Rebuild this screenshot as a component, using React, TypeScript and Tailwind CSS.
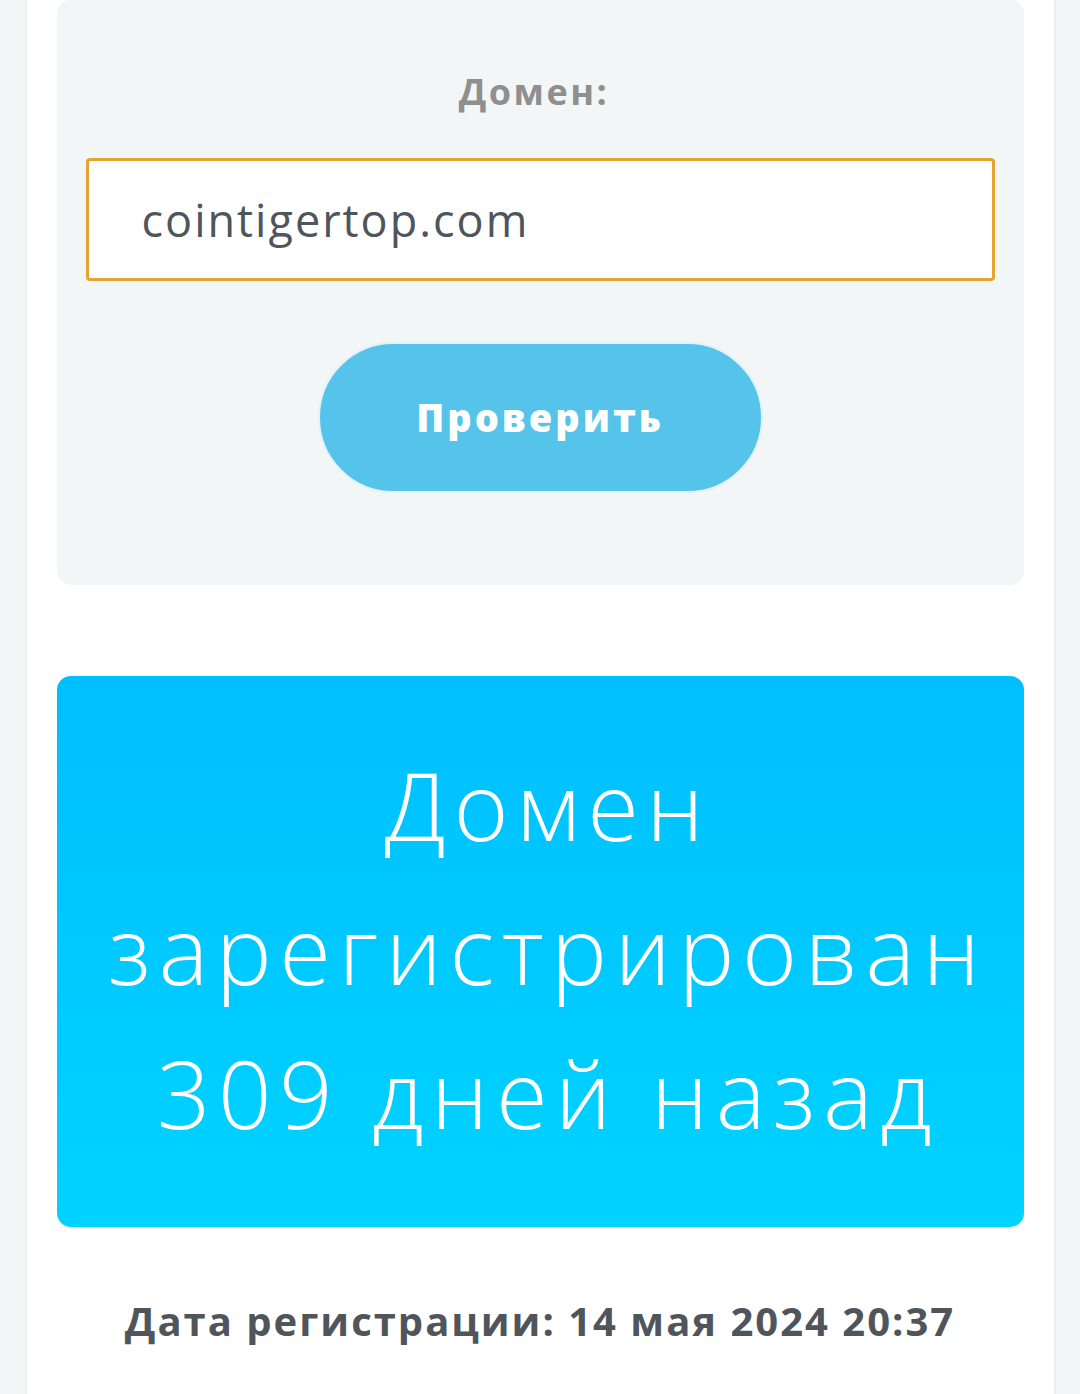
export default function App() {
  return (
    <div className="min-h-[1394px] bg-[#f4f5f7] flex justify-center font-['Open_Sans',sans-serif]">
      <div className="w-[1031px] bg-white border-x-2 border-[#eceef1] px-[30px] pb-10">
        {/* Form card */}
        <div className="bg-[#f3f6f7] rounded-[14px] px-[29px] pt-[68px] pb-[92px] flex flex-col items-center">
          <div className="text-[36px] leading-[48px] font-bold text-[#8f8f8f] tracking-[2.5px] -ml-[12px]">Домен:</div>
          <div className="mt-[42px] w-full h-[123px] bg-white border-[3px] border-[#e5a431] rounded-[4px] flex items-center px-[53px]">
            <span className="text-[45px] text-[#4f555c] tracking-[2px]">cointigertop.com</span>
          </div>
          <button
            type="button"
            className="mt-[61px] w-[445px] h-[151px] rounded-full bg-[#55c3ea] border-2 border-[#e3f1f8] text-white text-[38px] font-extrabold tracking-[3px]"
          >
            Проверить
          </button>
        </div>

        {/* Result */}
        <div className="mt-[91px] h-[551px] rounded-[14px] bg-gradient-to-b from-[#00bfff] to-[#00d3ff] flex items-center justify-center">
          <p className="text-white text-center font-light text-[94px] leading-[144px] tracking-[7.5px] whitespace-nowrap -mt-[6px] ml-[16px]">
            Домен
            <br />
            зарегистрирован
            <br />
            309 дней назад
          </p>
        </div>

        <div className="mt-[64px] text-center text-[40px] font-bold text-[#50555c] tracking-[2px]">
          Дата регистрации: 14 мая 2024 20:37
        </div>
      </div>
    </div>
  );
}
